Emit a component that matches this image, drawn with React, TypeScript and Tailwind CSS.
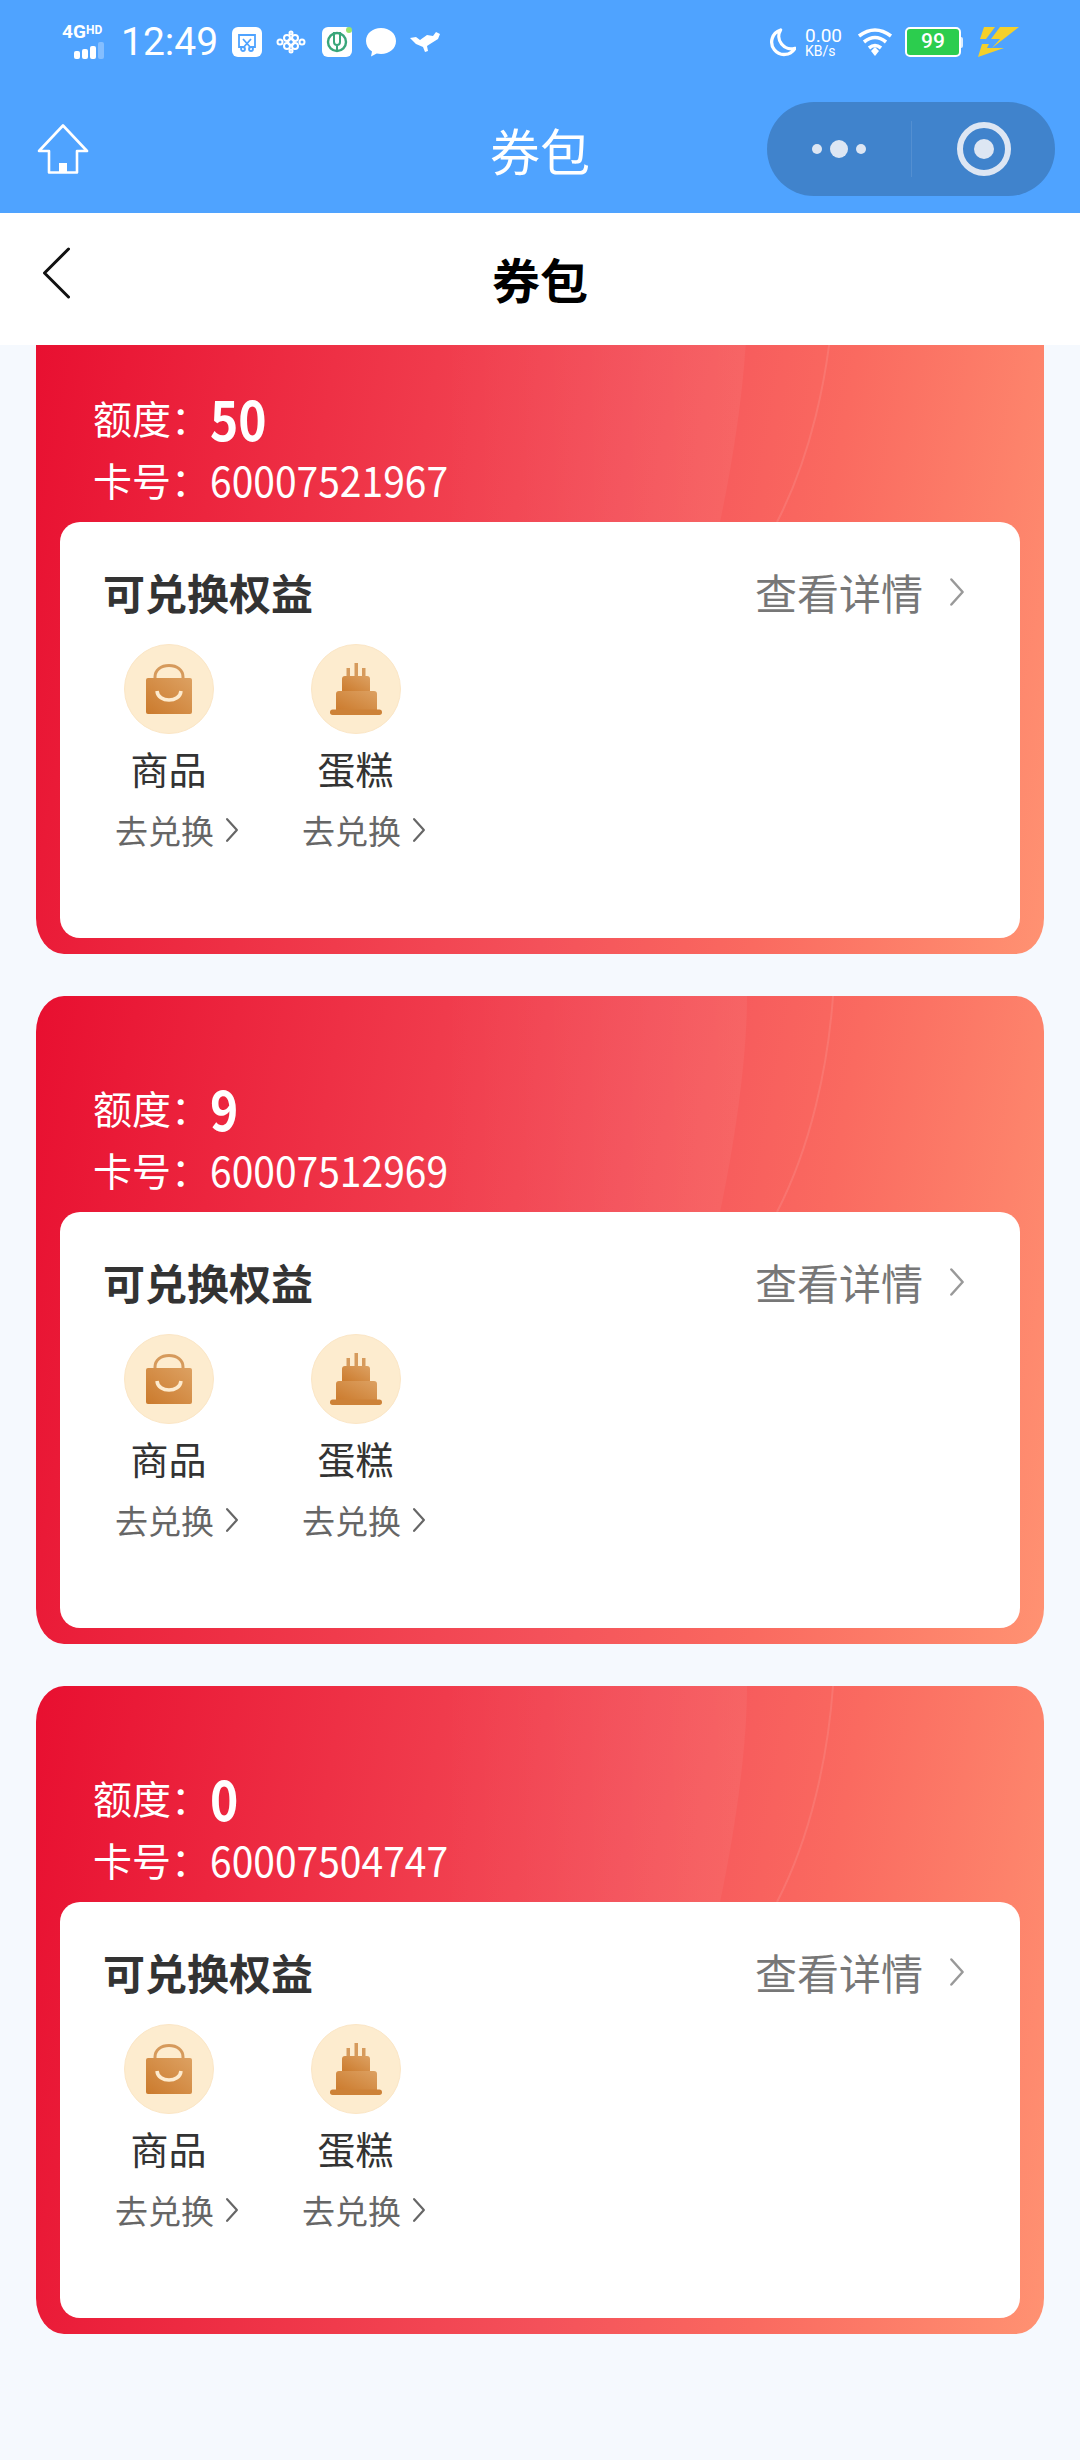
import React from "react";

const cjk = { fontFamily: '"Noto Sans CJK SC", "Noto Sans", sans-serif' };

const Chevron = ({ className }: { className: string }) => (
  <svg viewBox="0 0 12 24" className={className} fill="none" stroke="currentColor" strokeWidth="2" strokeLinecap="round" strokeLinejoin="round">
    <path d="M1.5 2 L10.5 12 L1.5 22" />
  </svg>
);

const StatusBar = () => (
  <div className="h-[64px] pt-[24px] flex items-start justify-between pl-[62px] pr-[60px] text-white">
    <div className="flex items-center h-[36px]">
      <div className="relative w-[46px] h-[34px]">
        <span className="absolute left-0 top-[-3px] text-[19px] font-bold leading-[20px]" style={{ fontFamily: "Roboto, sans-serif" }}>4G</span>
        <span className="absolute left-[24px] top-[-2px] text-[12px] font-bold leading-[14px]" style={{ fontFamily: "Roboto, sans-serif" }}>HD</span>
        <div className="absolute left-[12px] bottom-0 flex items-end gap-[2px]">
          <span className="w-[6px] h-[8px] bg-white rounded-[2px]" />
          <span className="w-[6px] h-[10px] bg-white rounded-[2px]" />
          <span className="w-[6px] h-[13px] bg-white rounded-[2px]" />
          <span className="w-[6px] h-[17px] bg-white/30 rounded-[2px]" />
        </div>
      </div>
      <span className="ml-[13px] text-[39px] leading-[36px]" style={{ fontFamily: "Roboto, sans-serif" }}>12:49</span>
      <div className="ml-[14px] w-[30px] h-[30px] bg-white rounded-[6px] flex items-center justify-center">
        <svg viewBox="0 0 24 24" className="w-[24px] h-[24px]" fill="none" stroke="#4fa3ff" strokeWidth="1.8">
          <path d="M8 17 H4 V5 H20 V17 H16" />
          <path d="M8 9 L16 18 M16 9 L8 18" />
          <circle cx="8" cy="19" r="2" />
          <circle cx="16" cy="19" r="2" />
        </svg>
      </div>
      <svg viewBox="0 0 30 24" className="ml-[14px] w-[30px] h-[24px]" fill="none" stroke="#fff" strokeWidth="2">
        <circle cx="11" cy="8" r="3" />
        <circle cx="19" cy="8" r="3" />
        <circle cx="11" cy="16" r="3" />
        <circle cx="19" cy="16" r="3" />
        <circle cx="15" cy="12" r="3" />
        <circle cx="4" cy="12" r="2.5" />
        <circle cx="26" cy="12" r="2.5" />
        <circle cx="15" cy="3" r="1.5" />
        <circle cx="15" cy="21" r="1.5" />
      </svg>
      <div className="relative ml-[16px] w-[30px] h-[30px] bg-white rounded-[6px] flex items-center justify-center">
        <svg viewBox="0 0 24 24" className="w-[24px] h-[24px]" fill="none" stroke="#3aa67a" strokeWidth="2.4">
          <circle cx="12" cy="12" r="9" />
          <path d="M9 2 V12 Q9 15 12 15 Q15 15 15 12 V2 M12 15 V22" strokeWidth="2" />
        </svg>
        <span className="absolute right-0 top-0 w-[6px] h-[6px] bg-[#9be36b] rounded-full" />
      </div>
      <svg viewBox="0 0 30 30" className="ml-[14px] w-[30px] h-[30px]" fill="#fff">
        <path d="M15 1 C23.5 1 30 6.5 30 14 C30 21.5 23.5 27 15 27 C13.5 27 12 26.8 10.7 26.5 L5 29.5 L6 24.5 C2.3 22 0 18.300 0 14 C0 6.5 6.500 1 15 1 Z" />
      </svg>
      <svg viewBox="0 0 30 22" className="ml-[14px] w-[30px] h-[22px]" fill="#fff">
        <path d="M0 7 L6 6 L10 9 L17 4 L23 5 L26 1 L30 3 L28 8 L20 13 L17 15 L18 20 L15 21 L13 16 L6 13 Z" />
      </svg>
    </div>
    <div className="flex items-center h-[36px]">
      <svg viewBox="0 0 28 30" className="w-[27px] h-[29px]">
        <path d="M12 2 A13 13 0 1 0 27 21 A13 13 0 0 1 12 2 Z" fill="none" stroke="#fff" strokeWidth="3.400" strokeLinejoin="round" />
      </svg>
      <div className="ml-[9px] w-[38px] flex flex-col items-start leading-none" style={{ fontFamily: "Roboto, sans-serif" }}>
        <span className="text-[19px] leading-[17px]">0.00</span>
        <span className="text-[14px] leading-[14px]">KB/s</span>
      </div>
      <svg viewBox="0 0 36 30" className="ml-[14px] w-[36px] h-[30px]" fill="none" stroke="#fff" strokeWidth="3.600">
        <path d="M2 9 Q18 -3 34 9" />
        <path d="M7 15 Q18 6 29 15" />
        <path d="M12 21 Q18 16 24 21" />
        <path d="M14 24 L18 20 L22 24 L18 29 Z" fill="#fff" stroke="none" />
      </svg>
      <div className="ml-[12px] flex items-center">
        <div className="w-[56px] h-[30px] rounded-[5px] border-2 border-white bg-[#2ccd4e] flex items-center justify-center text-[21px] font-medium text-white" style={{ fontFamily: "Roboto, sans-serif" }}>99</div>
        <span className="w-[2px] h-[11px] bg-white/80 rounded-r-sm" />
      </div>
      <svg viewBox="0 0 42 32" className="ml-[15px] w-[42px] h-[32px]" fill="#f4d02b">
        <path d="M6 1 H17 L8 13 H2 Z" />
        <path d="M22 1 H41 L14 22 L22 13 H13 Z" />
        <path d="M0 31 L4 18 H11 L9 22 H26 Z" />
      </svg>
    </div>
  </div>
);

const TopBar = () => (
  <div className="bg-[#4fa3ff] h-[213px] flex flex-col shrink-0">
    <StatusBar />
    <div className="relative flex-1 flex items-center justify-between pl-[37px] pr-[25px] pt-[20px]">
      <svg viewBox="0 0 52 50" className="w-[52px] h-[50px]" fill="none" stroke="#fff" strokeWidth="2.600" strokeLinejoin="round" strokeLinecap="round">
        <path d="M26 1.500 L50 27 H40 V48.500 H12 V27 H2 Z" />
        <path d="M22 48 V39 H30 V48 Z" fill="#fff" stroke="none" />
      </svg>
      <span className="absolute left-0 right-0 bottom-[-1px] h-[129px] flex items-center justify-center text-[50px] text-white" style={cjk}>券包</span>
      <div className="relative w-[288px] h-[94px] rounded-full bg-[#4083cc] flex items-center">
        <div className="w-[144px] flex items-center justify-center gap-[8px]">
          <span className="w-[10px] h-[10px] rounded-full bg-[#dde6f3]" />
          <span className="w-[18px] h-[18px] rounded-full bg-[#dde6f3]" />
          <span className="w-[10px] h-[10px] rounded-full bg-[#dde6f3]" />
        </div>
        <div className="w-px h-[56px] bg-white/10" />
        <div className="flex-1 flex items-center justify-center">
          <div className="w-[54px] h-[54px] rounded-full border-[6px] border-[#dde6f3] flex items-center justify-center">
            <span className="w-[20px] h-[20px] rounded-full bg-[#dde6f3]" />
          </div>
        </div>
      </div>
    </div>
  </div>
);

const NavBar = () => (
  <div className="relative z-10 bg-white h-[132px] shrink-0 flex items-center justify-center pb-[2px]">
    <svg viewBox="0 0 28 52" className="absolute left-[42px] top-[34px] w-[28px] h-[52px]" fill="none" stroke="#111" strokeWidth="3" strokeLinecap="round" strokeLinejoin="round">
      <path d="M26.500 2 L2.500 26 L26.500 50" />
    </svg>
    <span className="text-[48px] font-bold text-black leading-none" style={cjk}>券包</span>
  </div>
);

const BagIcon = () => (
  <svg viewBox="0 0 46 50" className="w-[46px] h-[50px]">
    <defs>
      <linearGradient id="bag" x1="0" y1="1" x2="1" y2="0">
        <stop offset="0" stopColor="#cb7a2c" />
        <stop offset="1" stopColor="#dda162" />
      </linearGradient>
    </defs>
    <path d="M9 15 V13 C9 6 15 1.500 23 1.500 C31 1.500 37 6 37 13 V15" fill="none" stroke="#d69a5c" strokeWidth="3" />
    <rect x="0" y="14" width="46" height="36" rx="2" fill="url(#bag)" />
    <path d="M11 27 C12 39 34 39 35 27" fill="none" stroke="#fdebcf" strokeWidth="3.500" />
  </svg>
);

const CakeIcon = () => (
  <svg viewBox="0 0 52 52" className="w-[52px] h-[52px]">
    <defs>
      <linearGradient id="cake" x1="0" y1="1" x2="1" y2="0">
        <stop offset="0" stopColor="#cb7a2c" />
        <stop offset="1" stopColor="#dda162" />
      </linearGradient>
    </defs>
    <rect x="16.500" y="5" width="3.500" height="9" fill="#d69a5c" />
    <rect x="24.500" y="0" width="3.500" height="14" fill="#d69a5c" />
    <rect x="32" y="5" width="3.500" height="9" fill="#d69a5c" />
    <path d="M12 29 V16 Q12 13 15 13 H37 Q40 13 40 16 V29 Z" fill="url(#cake)" />
    <path d="M6 48 V31 Q6 28 9 28 H44 Q47 28 47 31 V48 Z" fill="url(#cake)" />
    <rect x="0" y="46.500" width="52" height="5.500" rx="2.700" fill="#cd8238" />
  </svg>
);

const Benefit = ({ name, icon }: { name: string; icon: React.ReactNode }) => (
  <div className="w-[187px] flex flex-col items-center" style={cjk}>
    <div className="w-[90px] h-[90px] rounded-full bg-[#fdeccf] border border-[#fbe6c6] flex items-center justify-center">{icon}</div>
    <span className="mt-[10px] text-[38px] leading-[48px] text-[#333]">{name}</span>
    <div className="mt-[16px] ml-[17px] flex items-center text-[#666]">
      <span className="text-[33px] leading-[44px]">去兑换</span>
      <Chevron className="ml-[11px] w-[14px] h-[26px]" />
    </div>
  </div>
);

const Card = ({ amount, no, first }: { amount: string; no: string; first?: boolean }) => (
  <div className={`relative h-[648px] mx-[36px] rounded-[28px/36px] overflow-hidden bg-[linear-gradient(100deg,#e80f30_0%,#f4515a_55%,#fa6a60_74%,#ff9272_100%)] ${first ? "mt-[-39px]" : "mt-[42px]"}`} style={cjk}>
    {/* faint arcs in the top right corner */}
    <svg viewBox="0 0 1008 216" className="absolute left-0 top-0 w-[1008px] h-[216px]" fill="none">
      <defs>
        <linearGradient id="wedge" x1="400" y1="0" x2="710" y2="0" gradientUnits="userSpaceOnUse">
          <stop offset="0" stopColor="#fff" stopOpacity="0" />
          <stop offset="1" stopColor="#fff" stopOpacity="0.05" />
        </linearGradient>
      </defs>
      <path d="M684 216 C700 140 711 60 711 0 H400 V216 Z" fill="url(#wedge)" />
      <path d="M741 216 C775 150 792 70 797 0" stroke="#fff" strokeOpacity="0.1" strokeWidth="2" />
    </svg>
    <div className="relative pl-[57px] pt-[81px] text-white">
      <div className="flex items-center h-[60px]">
        <span className="w-[117px] text-[39px] leading-[44px]">额度：</span>
        <span className="text-[48px] font-bold leading-[48px] inline-block scale-y-[1.16]">{amount}</span>
      </div>
      <div className="flex items-center h-[60px] mt-[2px]">
        <span className="w-[117px] text-[39px] leading-[44px]">卡号：</span>
        <span className="text-[39px] leading-[44px] inline-block scale-y-[1.08]">{no}</span>
      </div>
    </div>
    <div className="absolute left-[24px] right-[24px] top-[216px] bottom-[16px] bg-white rounded-[20px] pl-[43px] pr-[47px] pt-[41px]">
      <div className="flex items-center justify-between h-[56px]">
        <span className="text-[42px] font-bold text-[#333]">可兑换权益</span>
        <div className="flex items-center text-[#777] pr-[8px]">
          <span className="text-[42px]">查看详情</span>
          <Chevron className="ml-[26px] w-[16px] h-[30px] mt-[2px] text-[#999]" />
        </div>
      </div>
      <div className="flex mt-[25px] ml-[-28px]">
        <Benefit name="商品" icon={<BagIcon />} />
        <Benefit name="蛋糕" icon={<CakeIcon />} />
      </div>
    </div>
  </div>
);

export default function App() {
  return (
    <div className="w-[1080px] h-[2460px] overflow-hidden flex flex-col bg-[#f5f9fe]">
      <TopBar />
      <NavBar />
      <div className="flex-1 overflow-hidden">
        <Card first amount="50" no="60007521967" />
        <Card amount="9" no="60007512969" />
        <Card amount="0" no="60007504747" />
      </div>
    </div>
  );
}
